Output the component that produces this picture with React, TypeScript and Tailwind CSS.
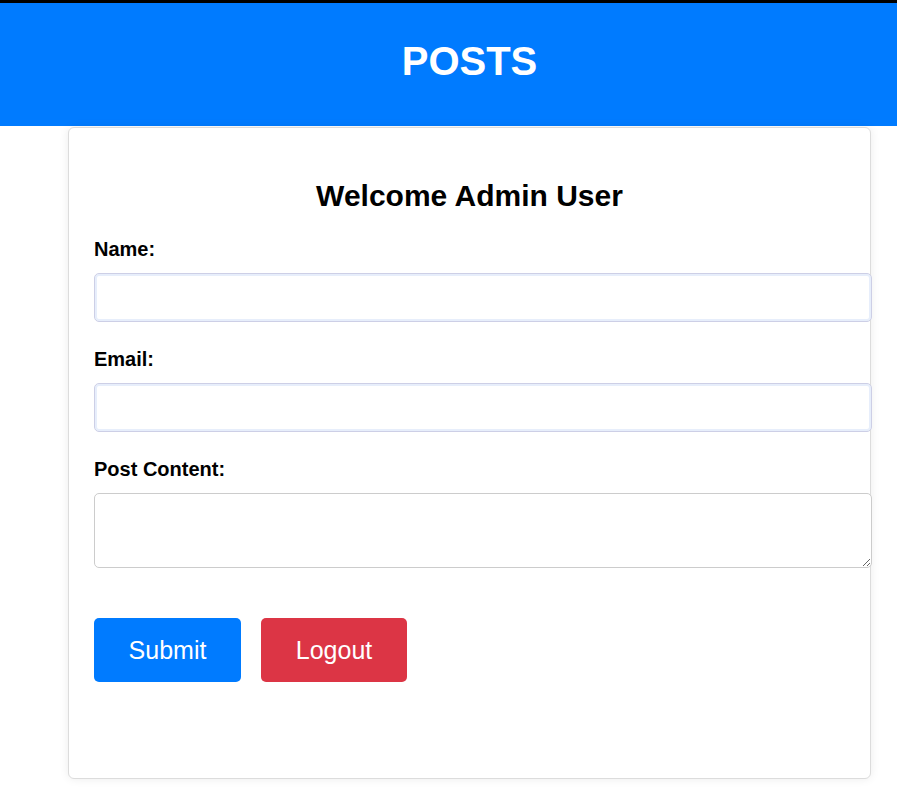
import React from "react";

export default function App() {
  const font = { fontFamily: '"Liberation Sans", Arial, sans-serif' };
  return (
    <div className="min-h-[797px] bg-white" style={font}>
      <div className="h-[3px] bg-black" />
      <header className="bg-[#007bff] pt-[35px] pb-[42px]">
        <div className="ml-[68px] w-[803px] text-center text-white text-[40px] font-bold leading-[46px]">
          POSTS
        </div>
      </header>
      <div className="ml-[68px] mt-[1px] w-[803px] rounded-[6px] border border-[#dcdcdc] bg-white shadow-[0_0_10px_rgba(0,0,0,0.08)] px-[25px] pt-[50px] pb-[96px]">
        <h2 className="text-center text-[30px] font-bold leading-[36px] text-black">
          Welcome Admin User
        </h2>
        <label className="mt-[24px] block text-[20px] font-bold leading-[22px] text-black">
          Name:
        </label>
        <input
          type="text"
          className="mt-[13px] block h-[49px] w-[778px] rounded-[5px] border border-[#cdcfe6] bg-white shadow-[inset_0_0_0_2px_#e7eefb] outline-none"
        />
        <label className="mt-[26px] block text-[20px] font-bold leading-[22px] text-black">
          Email:
        </label>
        <input
          type="email"
          className="mt-[13px] block h-[49px] w-[778px] rounded-[5px] border border-[#cdcfe6] bg-white shadow-[inset_0_0_0_2px_#e7eefb] outline-none"
        />
        <label className="mt-[26px] block text-[20px] font-bold leading-[22px] text-black">
          Post Content:
        </label>
        <textarea className="mt-[13px] block h-[75px] w-[778px] rounded-[5px] border border-[#cccccc] bg-white outline-none" />
        <div className="mt-[50px] flex gap-[20px]">
          <button className="h-[64px] w-[147px] rounded-[5px] bg-[#007bff] text-[25px] leading-[29px] text-white">
            Submit
          </button>
          <button className="h-[64px] w-[146px] rounded-[5px] bg-[#dc3545] text-[25px] leading-[29px] text-white">
            Logout
          </button>
        </div>
      </div>
    </div>
  );
}
